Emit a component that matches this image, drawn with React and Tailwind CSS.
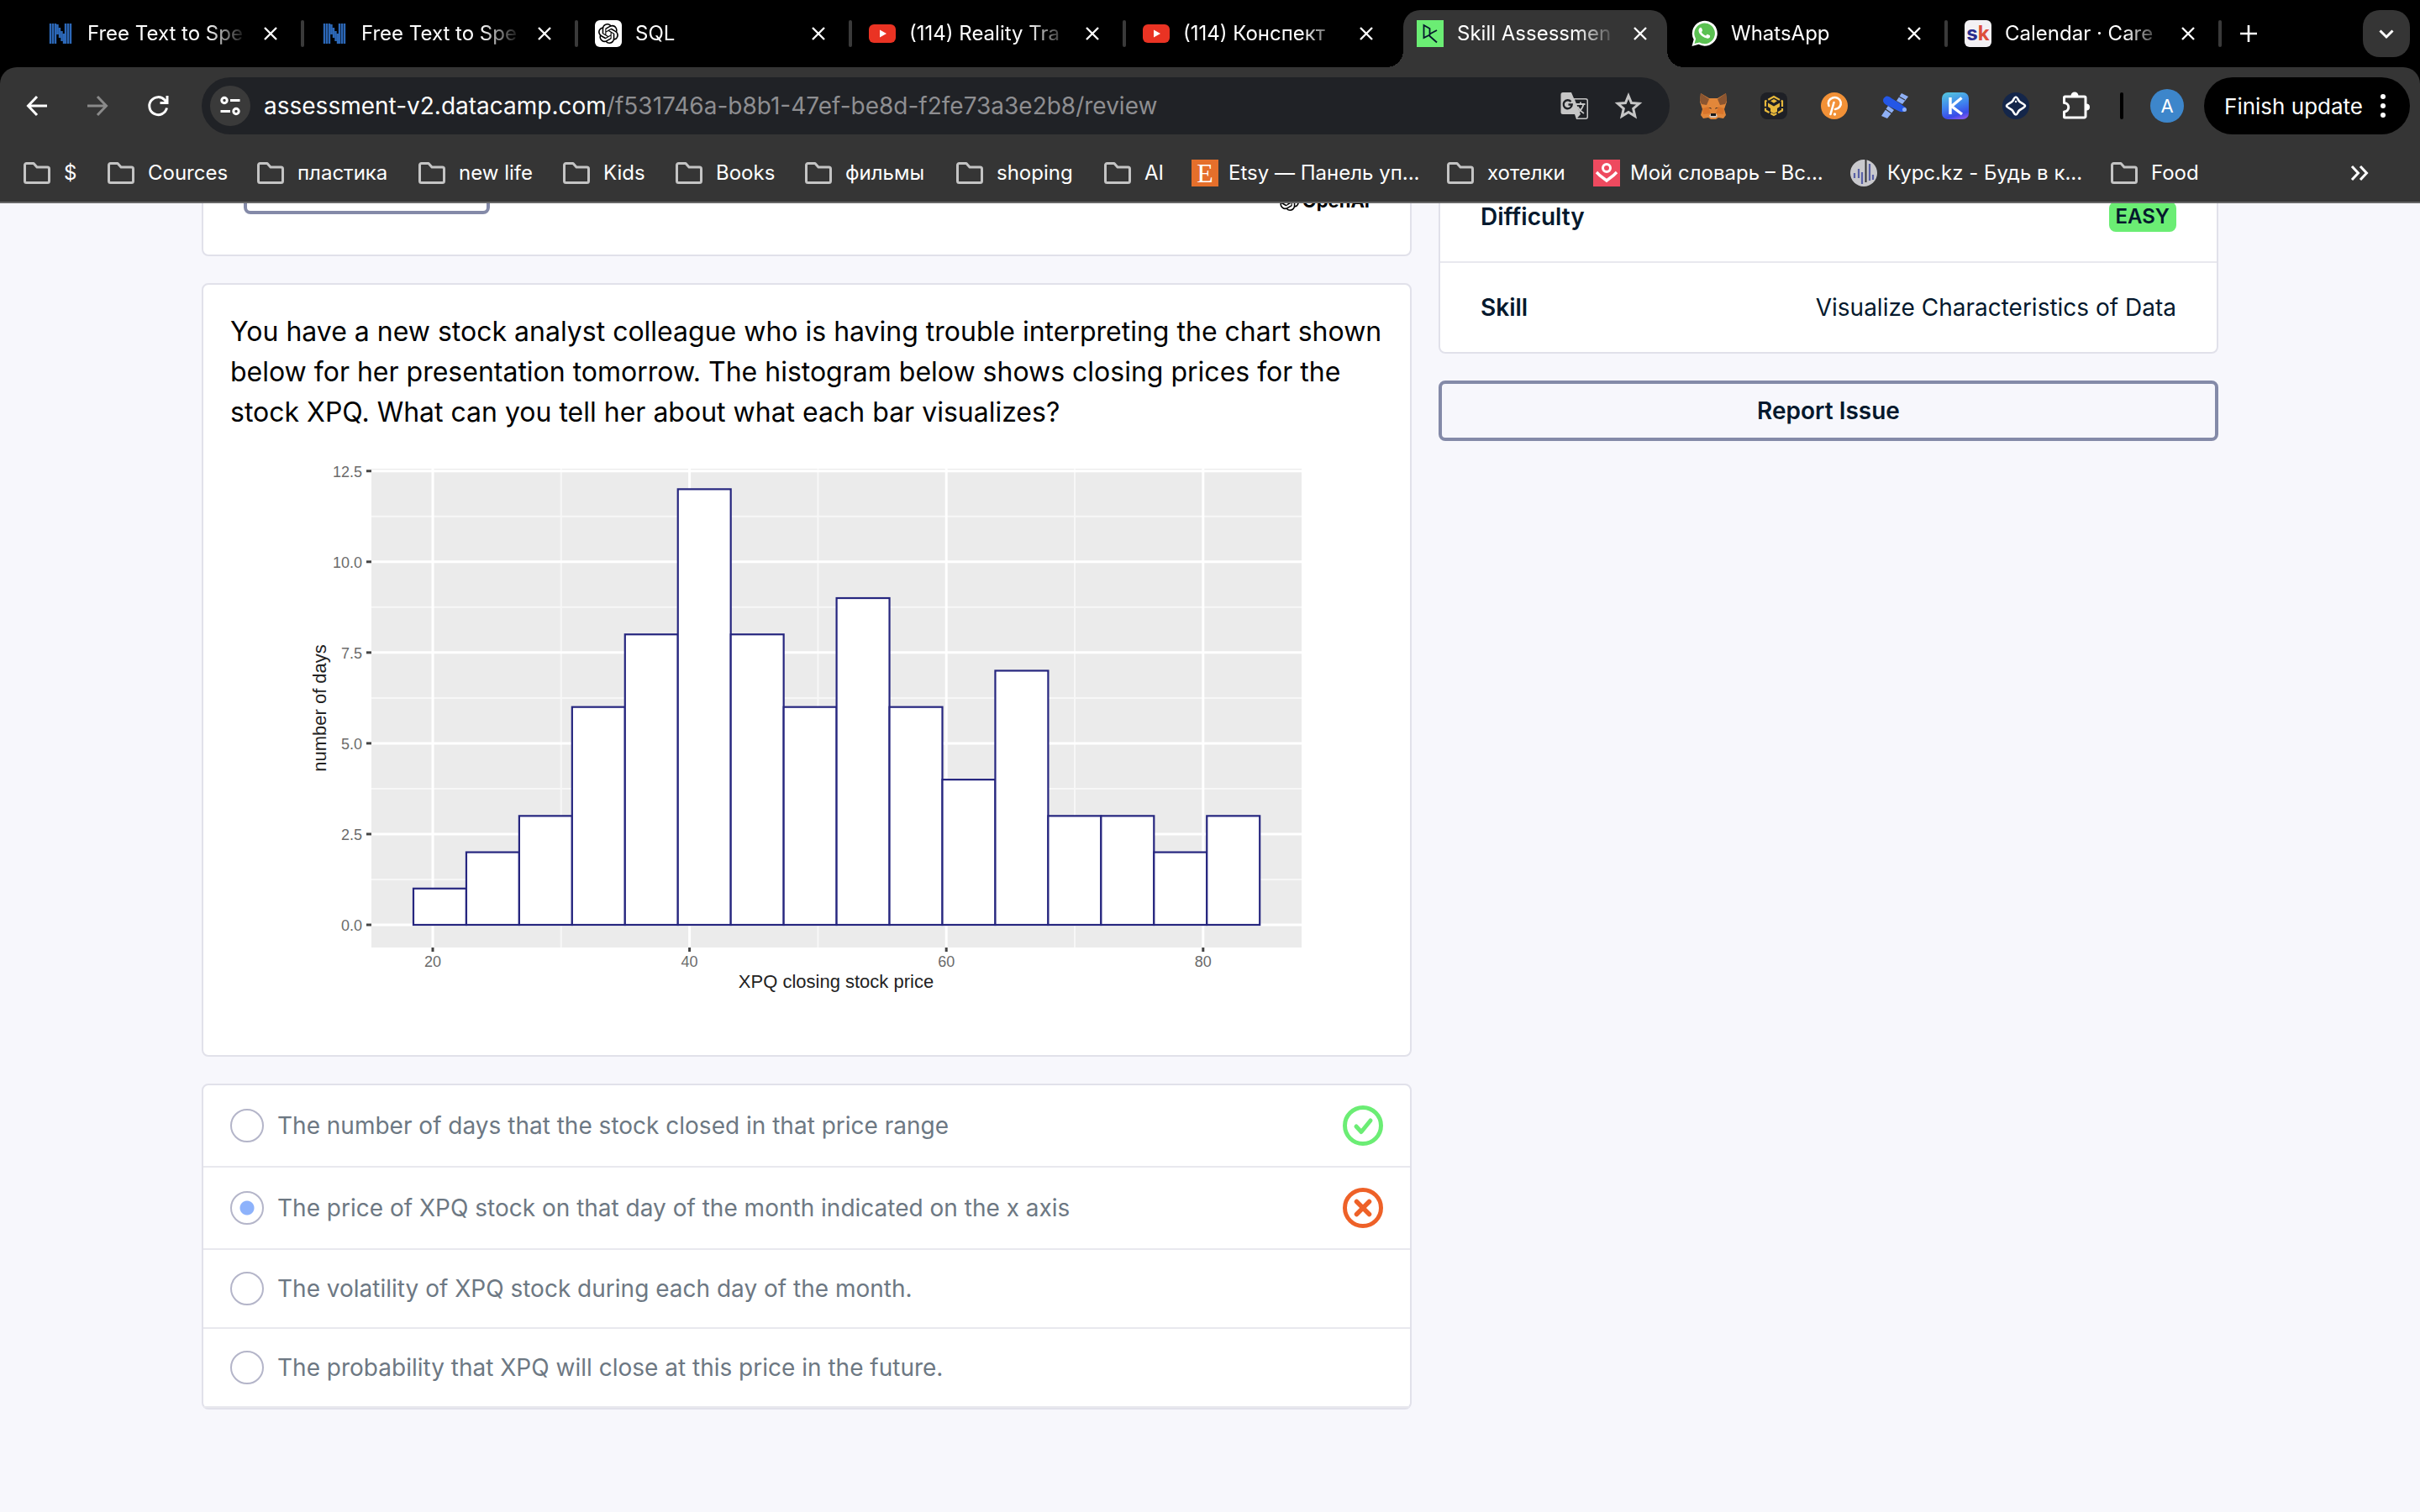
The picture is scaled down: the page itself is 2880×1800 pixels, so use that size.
import { SiOpenai } from "react-icons/si";

const FolderIcon = () => (
  <svg viewBox="0 0 32 32" className="size-8 shrink-0" fill="none" stroke="#c4c4c4" strokeWidth="3" strokeLinejoin="round">
    <path d="M1.5 6.500a2 2 0 0 1 2-2h8.500l4 4.500h12.500a2 2 0 0 1 2 2v14.500a2 2 0 0 1-2 2h-25a2 2 0 0 1-2-2z" />
  </svg>
);

const CloseIcon = () => (
  <svg viewBox="0 0 16 16" className="size-4" stroke="#fff" strokeWidth="2.400">
    <path d="M1 1l14 14M15 1L1 15" />
  </svg>
);

const NaturalIcon = () => (
  <svg viewBox="0 0 32 32" className="size-8 shrink-0" stroke="#2c68b8" strokeWidth="2.400">
    <path d="M4 4v24M7 4v24M10 4v24M22 4v24M25 4v24M28 4v24M12.500 5v12M15 9v12M17.500 13v12M20 16v12" />
  </svg>
);

const OpenAiTile = () => (
  <span className="flex size-8 shrink-0 items-center justify-center rounded-md bg-white">
    <SiOpenai className="size-6 text-black" />
  </span>
);

const YoutubeIcon = () => (
  <svg viewBox="0 0 32 32" className="size-8 shrink-0">
    <rect y="5" width="32" height="22" rx="6" fill="#ea3323" />
    <path d="M13 11.500v9l8-4.500z" fill="#fff" />
  </svg>
);

const DataCampIcon = () => (
  <svg viewBox="0 0 32 32" className="size-8 shrink-0">
    <rect width="32" height="32" fill="#6bed74" />
    <path d="M8.500 6v15l7-3.500v-7.500zM24 12l-8.500 4.500v2.500l8.500 7.500" fill="none" stroke="#05192d" strokeWidth="1.800" />
  </svg>
);

const WhatsAppIcon = () => (
  <svg viewBox="0 0 32 32" className="size-8 shrink-0">
    <path d="M1.500 31l2.200-8A15 15 0 1 1 9.500 28.800z" fill="#fff" />
    <path d="M4.500 28l1.600-5.800A12.300 12.300 0 1 1 10.500 26.500z" fill="#5bc152" />
    <path d="M10.500 9.500c1-1.200 2.200-.9 2.600.1l1 2.400c.2.600-1 1.700-1.100 2.200 1 2 2.800 3.500 5 4.400.6-.2 1.300-1.800 1.900-1.800l2.700 1.300c.9.500.6 2-.3 2.800-3.300 3-14.500-3.800-12.600-10z" fill="#fff" />
  </svg>
);

const CalendarIcon = () => (
  <span className="flex size-8 shrink-0 items-center justify-center rounded-md bg-[#f3f1f4] text-2xl leading-none font-bold">
    <span className="text-[#2b2e8c]">s</span>
    <span className="text-[#dd4f3b]">k</span>
  </span>
);

const tabs = [
  { title: "Free Text to Spe", icon: NaturalIcon, line: true },
  { title: "Free Text to Spe", icon: NaturalIcon, line: true },
  { title: "SQL", icon: OpenAiTile, line: true },
  { title: "(114) Reality Tra", icon: YoutubeIcon, line: true },
  { title: "(114) Конспект", icon: YoutubeIcon },
  { title: "Skill Assessmen", icon: DataCampIcon, active: true },
  { title: "WhatsApp", icon: WhatsAppIcon, line: true },
  { title: "Calendar · Care", icon: CalendarIcon, line: true },
];

function Tab({ tab }) {
  const Icon = tab.icon;
  return (
    <div className="relative flex h-20 w-[326px] items-center pr-[30px] pl-[22px]">
      {tab.active && (
        <div className="absolute inset-x-[6px] top-3 bottom-0 rounded-t-[20px] bg-[#353535]">
          <div className="absolute bottom-0 -left-5 size-5 bg-[radial-gradient(circle_at_0_0,transparent_20px,#353535_20px)]" />
          <div className="absolute -right-5 bottom-0 size-5 bg-[radial-gradient(circle_at_100%_0,transparent_20px,#353535_20px)]" />
        </div>
      )}
      <div className="relative flex min-w-0 flex-1 items-center">
        <Icon />
        <span className="ml-4 min-w-0 flex-1 mask-r-from-75% mask-r-to-100% text-2xl whitespace-nowrap">{tab.title}</span>
        <button aria-label="Close tab" className="ml-5">
          <CloseIcon />
        </button>
      </div>
      {tab.line && <span className="absolute right-[-2px] h-8 w-1 rounded-full bg-[#3a3a3a]" />}
    </div>
  );
}

const EtsyIcon = () => (
  <span className="flex size-8 shrink-0 items-center justify-center bg-[#e56f2b] font-['Liberation_Serif',serif] text-[32px] leading-none text-white">E</span>
);

const DictionaryIcon = () => (
  <svg viewBox="0 0 32 32" className="size-8 shrink-0">
    <rect width="32" height="32" fill="#ee4a5f" />
    <circle cx="16" cy="10" r="4.500" fill="none" stroke="#fff" strokeWidth="3" />
    <path d="M4 15l4 4 8 6 8-6 4-4" fill="none" stroke="#fff" strokeWidth="3.500" />
  </svg>
);

const CurrencyIcon = () => (
  <svg viewBox="0 0 32 32" className="size-8 shrink-0">
    <circle cx="16" cy="16" r="16" fill="#c9c9cd" />
    <path d="M5 16v6M10 11v11M14 15v14M23 5v20M27 18v6" stroke="#5961a6" strokeWidth="2.200" />
    <path d="M18.500 0v27" stroke="#333" strokeWidth="2" />
  </svg>
);

const bookmarks = [
  { label: "$", width: "w-[100px]" },
  { label: "Cources", width: "w-[178px]" },
  { label: "пластика", width: "w-[192px]" },
  { label: "new life", width: "w-[172px]" },
  { label: "Kids", width: "w-[134px]" },
  { label: "Books", width: "w-[154px]" },
  { label: "фильмы", width: "w-[180px]" },
  { label: "shoping", width: "w-[176px]" },
  { label: "AI", width: "w-[104px]" },
  { label: "Etsy — Панель уп...", width: "w-[304px]", icon: EtsyIcon },
  { label: "хотелки", width: "w-[174px]" },
  { label: "Мой словарь – Вс...", width: "w-[306px]", icon: DictionaryIcon },
  { label: "Курс.kz - Будь в к...", width: "w-[310px]", icon: CurrencyIcon },
  { label: "Food", width: "w-[120px]" },
];

const TranslateIcon = () => (
  <svg viewBox="0 0 34 34" className="size-[34px]">
    <path d="M3 1h10l3 7h14a3 3 0 0 1 3 3v19a3 3 0 0 1-3 3H19l-2-6H3a2.500 2.500 0 0 1-2.500-2.500v-21A2.500 2.500 0 0 1 3 1z" fill="#c6c6c6" />
    <path d="M17 9.500h13a1.500 1.500 0 0 1 1.500 1.500v19a1.500 1.500 0 0 1-1.500 1.500H20l4-4.500z" fill="#202226" />
    <path d="M18.500 15h11M24 12.500V15M27.500 15c-1 5-4 8-7 10M20.500 18c2 4 4 6 7.500 8" fill="none" stroke="#c6c6c6" strokeWidth="1.800" />
    <path d="M12.500 12a5 5 0 1 0 1.200 3.500H9.500" fill="none" stroke="#202226" strokeWidth="2.400" />
  </svg>
);

const StarIcon = () => (
  <svg viewBox="0 0 34 34" className="size-[34px]" fill="none" stroke="#c6c6c6" strokeWidth="3">
    <path d="M17 5l3.500 8.500 9.200.8-7 6 2.100 9L17 24.500l-7.800 4.800 2.100-9-7-6 9.200-.8z" />
  </svg>
);

const FoxIcon = () => (
  <svg viewBox="0 0 32 32" className="size-8">
    <path d="M1 1l10 6h10l10-6 1 10-3 9 2 7-3 4-6-1-3 2h-6l-3-2-6 1-3-4 2-7-3-9z" fill="#e2873a" />
    <path d="M1 1l10 7-3 7-6-1-2-4zM31 1L21 8l3 7 6-1 2-4z" fill="#8b5530" />
    <path d="M3 19l7-2 3 8-9 1zM29 19l-7-2-3 8 9 1z" fill="#d9752b" />
    <path d="M10 18l4 2-1-2zM22 18l-4 2 1-2z" fill="#4a3226" />
    <path d="M11 28l2-3h6l2 3-2 2h-6z" fill="#d5c5b8" />
    <path d="M13 25h6v3h-6z" fill="#18181a" />
  </svg>
);

const BinanceIcon = () => (
  <svg viewBox="0 0 32 32" className="size-8">
    <rect width="32" height="32" rx="8" fill="#1e2026" />
    <path d="M16 5l10 5.500v11L16 27 6 21.500v-11z" fill="none" stroke="#e8b93c" strokeWidth="2.200" strokeDasharray="8 2" />
    <path d="M16 8l4 2.300-4 2.400-4-2.400zM9 12.500l7 4 7-4v4.500l-3 2v4L16 25l-4-2v-4l-3-2z" fill="#e8b93c" />
  </svg>
);

const PolkadotIcon = () => (
  <svg viewBox="0 0 32 32" className="size-8">
    <circle cx="16" cy="16" r="16" fill="#f29137" />
    <path d="M9.500 16a7.500 7 0 1 1 7.500 4M15.500 12L11.500 26" fill="none" stroke="#fff" strokeWidth="2.600" strokeLinecap="round" />
    <circle cx="16.500" cy="26" r="1.700" fill="#fff" />
  </svg>
);

const SatelliteIcon = () => (
  <svg viewBox="0 0 32 32" className="size-8">
    <path d="M24 1l8 4-7 9-7-4zM8 16l7 5-8 10-7-3z" fill="#8fb0f5" />
    <path d="M21 5l7 4M5 20l7 5" stroke="#353535" strokeWidth="1.200" />
    <path d="M5 5c2-1 5 0 7 2l10 6 4 3 3 2c1 3-1 5-3 5-3 1-5-1-8-2L6 15C2 13 0 8 5 5z" fill="#2457e6" />
    <circle cx="27.500" cy="20.500" r="2.500" fill="#8fb0f5" />
  </svg>
);

const KeplrIcon = () => (
  <svg viewBox="0 0 32 32" className="size-8">
    <defs>
      <linearGradient id="keplr" x1="0.300" y1="0" x2="0.600" y2="1">
        <stop offset="0" stopColor="#52c0e0" />
        <stop offset="0.500" stopColor="#3f82ee" />
        <stop offset="0.850" stopColor="#3b4be8" />
        <stop offset="1" stopColor="#7a55ee" />
      </linearGradient>
    </defs>
    <rect width="32" height="32" rx="7" fill="url(#keplr)" />
    <path d="M10 6v20M23.500 6.500l-12 10 12.500 9.500" fill="none" stroke="#fff" strokeWidth="3.400" />
  </svg>
);

const StarWalletIcon = () => (
  <svg viewBox="0 0 32 32" className="size-8">
    <circle cx="16" cy="16" r="16" fill="#14264a" />
    <path d="M16 5.500c2 0 2.500 3 4 5s7 3.500 7 5.500-5 3.500-7 5.500-2 5-4 5-2.500-3-4-5-7-3.500-7-5.500 5.500-3.500 7-5.500 2-5 4-5z" fill="none" stroke="#fff" strokeWidth="2.600" />
    <circle cx="16" cy="11" r="1.200" fill="#fff" />
  </svg>
);

const PuzzleIcon = () => (
  <svg viewBox="0 0 32 34" className="h-[34px] w-8">
    <path d="M2.500 6h23a1.500 1.500 0 0 1 1.500 1.500v22a1.500 1.500 0 0 1-1.500 1.500h-23a1 1 0 0 1-1-1v-6a5 5 0 0 0 0-10.500V7a1 1 0 0 1 1-1z" fill="none" stroke="#fff" strokeWidth="3" strokeLinejoin="round" />
    <path d="M9.500 5a4.500 4.500 0 0 1 9 0zM28 14.500a4 4 0 0 1 0 8z" fill="#fff" />
  </svg>
);

const extensions = [
  ["MetaMask", FoxIcon],
  ["BNB wallet", BinanceIcon],
  ["Polkadot", PolkadotIcon],
  ["Satellite", SatelliteIcon],
  ["Keplr", KeplrIcon],
  ["Star wallet", StarWalletIcon],
  ["Extensions", PuzzleIcon],
];

function BrowserChrome() {
  return (
    <header className="shrink-0 bg-black text-white">
      <nav className="flex h-20 items-center pr-3 pl-[34px]" aria-label="Tabs">
        {tabs.map((tab, i) => (
          <Tab key={i} tab={tab} />
        ))}
        <button aria-label="New tab" className="ml-[22px]">
          <svg viewBox="0 0 24 24" className="size-6" stroke="#fff" strokeWidth="2.600">
            <path d="M12 2v20M2 12h20" />
          </svg>
        </button>
        <button aria-label="Search tabs" className="ml-auto flex size-14 items-center justify-center rounded-[20px] bg-[#353535]">
          <svg viewBox="0 0 20 20" className="size-5" fill="none" stroke="#fff" strokeWidth="3">
            <path d="M2.500 6.500L10 14l7.500-7.500" />
          </svg>
        </button>
      </nav>

      <div className="rounded-t-[20px] border-b-2 border-[#666] bg-[#353535]">
        <div className="flex h-[92px] items-center pt-3 pr-3 pb-3 pl-7">
          <div className="flex gap-10">
            <button aria-label="Back">
              <svg viewBox="0 0 32 32" className="size-8" fill="none" stroke="#fff" strokeWidth="3">
                <path d="M28 16H6M16 5L5.500 16 16 27" />
              </svg>
            </button>
            <button aria-label="Forward">
              <svg viewBox="0 0 32 32" className="size-8" fill="none" stroke="#8a8a8a" strokeWidth="3">
                <path d="M4 16h22M16 5l10.500 11L16 27" />
              </svg>
            </button>
            <button aria-label="Reload">
              <svg viewBox="0 0 32 32" className="size-8" fill="none" stroke="#fff" strokeWidth="3">
                <path d="M26.500 18.500a10.500 10.500 0 1 1-2.500-9.500l3 3.500M27 4v8.500h-8.500" />
              </svg>
            </button>
          </div>
          <div className="mr-9 ml-9 flex h-[68px] flex-1 items-center rounded-full bg-[#202226] pr-8 pl-[10px]">
            <button aria-label="Site information" className="flex size-12 items-center justify-center rounded-full bg-[#3a3a3a]">
              <svg viewBox="0 0 28 28" className="size-7" fill="none" stroke="#fff" strokeWidth="3">
                <circle cx="7" cy="7.500" r="3.200" />
                <path d="M14 7.500h11.500M2.500 20.500H14" />
                <circle cx="21" cy="20.500" r="3.200" />
              </svg>
            </button>
            <p className="ml-4 text-[28px] leading-9 text-[#8e8e91]">
              <span className="text-white">assessment-v2.datacamp.com</span>/f531746a-b8b1-47ef-be8d-f2fe73a3e2b8/review
            </p>
            <div className="ml-auto flex items-center gap-[30px]">
              <button aria-label="Translate">
                <TranslateIcon />
              </button>
              <button aria-label="Bookmark this page">
                <StarIcon />
              </button>
            </div>
          </div>
          <div className="flex items-center gap-10">
            {extensions.map(([name, Icon]) => (
              <button key={name} aria-label={name}>
                <Icon />
              </button>
            ))}
          </div>
          <span className="ml-9 h-8 w-1 rounded-full bg-black" />
          <button className="ml-8 flex size-10 items-center justify-center rounded-full bg-[#3d86cb] text-[22px] leading-none">A</button>
          <button className="ml-6 flex h-[68px] items-center rounded-full bg-black pr-7 pl-6 text-[26px]">
            Finish update
            <svg viewBox="0 0 8 32" className="ml-5 h-8 w-2" fill="#fff">
              <circle cx="4" cy="5" r="3" />
              <circle cx="4" cy="16" r="3" />
              <circle cx="4" cy="27" r="3" />
            </svg>
          </button>
        </div>
        <nav className="flex h-[68px] items-center pl-7" aria-label="Bookmarks">
          {bookmarks.map(({ label, width, icon: Icon = FolderIcon }) => (
            <a key={label} href="#" className={`flex shrink-0 items-center whitespace-nowrap text-2xl ${Icon === FolderIcon ? "gap-4" : "gap-3"} ${width}`}>
              <Icon />
              {label}
            </a>
          ))}
          <button aria-label="More bookmarks" className="mr-[60px] ml-auto">
            <svg viewBox="0 0 24 24" className="size-6" fill="none" stroke="#fff" strokeWidth="3">
              <path d="M3 4l7.500 8L3 20M13 4l7.500 8-7.500 8" />
            </svg>
          </button>
        </nav>
      </div>
    </header>
  );
}

const counts = [1, 2, 3, 6, 8, 12, 8, 6, 9, 6, 4, 7, 3, 3, 2, 3];
const baseY = 562;
const unitY = 43.22;
const panel = { left: 168, right: 1275, top: 19, bottom: 589 };
const xOf = (v) => 241 + (v - 20) * 15.28;
const yOf = (v) => baseY - v * unitY;

function Histogram() {
  return (
    <svg viewBox="0 0 1372 660" className="mt-6 block w-full font-['Liberation_Sans',sans-serif]" role="img" aria-label="Histogram of XPQ closing stock price">
      <rect x={panel.left} y={panel.top} width={panel.right - panel.left} height={panel.bottom - panel.top} fill="#ebebeb" />
      {[1.25, 3.75, 6.25, 8.75, 11.25].map((v) => (
        <path key={v} d={`M${panel.left} ${yOf(v)}H${panel.right}`} stroke="#f7f7f7" strokeWidth="2" />
      ))}
      {[30, 50, 70].map((v) => (
        <path key={v} d={`M${xOf(v)} ${panel.top}V${panel.bottom}`} stroke="#f7f7f7" strokeWidth="2" />
      ))}
      {[0, 2.5, 5, 7.5, 10, 12.5].map((v) => (
        <g key={v}>
          <path d={`M${panel.left} ${yOf(v)}H${panel.right}`} stroke="#fff" strokeWidth="3" />
          <path d={`M${panel.left - 6} ${yOf(v)}h6`} stroke="#444" strokeWidth="3" />
          <text x="157" y={yOf(v) + 7} textAnchor="end" fontSize="18" fill="#6b6b6b">{v.toFixed(1)}</text>
        </g>
      ))}
      {[20, 40, 60, 80].map((v) => (
        <g key={v}>
          <path d={`M${xOf(v)} ${panel.top}V${panel.bottom}`} stroke="#fff" strokeWidth="3" />
          <path d={`M${xOf(v)} ${panel.bottom}v5`} stroke="#444" strokeWidth="3" />
          <text x={xOf(v)} y="612" textAnchor="middle" fontSize="18" fill="#6b6b6b">{v}</text>
        </g>
      ))}
      {counts.map((c, i) => (
        <rect key={i} x={218 + i * 62.95} y={yOf(c)} width="62.95" height={c * unitY} fill="#fff" stroke="#26267f" strokeWidth="2.200" />
      ))}
      <text x="721" y="637" textAnchor="middle" fontSize="22" fill="#222">XPQ closing stock price</text>
      <text transform="translate(114 304) rotate(-90)" textAnchor="middle" fontSize="22" fill="#222">number of days</text>
    </svg>
  );
}

const CheckCircle = () => (
  <svg viewBox="0 0 48 48" className="size-12" fill="none" stroke="#6bed74" strokeLinecap="round" strokeLinejoin="round" role="img" aria-label="Correct">
    <circle cx="24" cy="24" r="21.500" strokeWidth="5" />
    <path d="M16 25l6 6.500L33 18" strokeWidth="5" />
  </svg>
);

const CrossCircle = () => (
  <svg viewBox="0 0 48 48" className="size-12" fill="none" stroke="#ee6128" strokeLinecap="round" role="img" aria-label="Incorrect">
    <circle cx="24" cy="24" r="21.500" strokeWidth="5" />
    <path d="M16.500 16.500l15 15M31.500 16.500l-15 15" strokeWidth="5.500" />
  </svg>
);

const answers = [
  { text: "The number of days that the stock closed in that price range", mark: CheckCircle },
  { text: "The price of XPQ stock on that day of the month indicated on the x axis", mark: CrossCircle, chosen: true },
  { text: "The volatility of XPQ stock during each day of the month." },
  { text: "The probability that XPQ will close at this price in the future." },
];

const card = "rounded-lg border-2 border-[#e1e1ea] bg-white";

export default function App() {
  return (
    <div className="flex min-h-screen flex-col bg-[#f7f7fc] font-[Inter,'Noto_Sans',sans-serif]">
      <BrowserChrome />
      <main className="flex-1 overflow-hidden px-60 pb-20">
        <div className="-mt-[109px] grid grid-cols-[1440fr_928fr] items-start gap-8">
          <div className="flex flex-col gap-8">
            <section className={`${card} flex items-end justify-between p-12`}>
              <button aria-label="Explain answer" className="h-[72px] w-[293px] rounded-lg border-4 border-[#848aa8]" />
              <div className="flex items-center gap-1">
                <SiOpenai className="size-6" />
                <span className="text-[22px] leading-8 font-bold">OpenAI</span>
              </div>
            </section>

            <section className={`${card} px-8 pt-8 pb-[57px]`}>
              <p className="text-[32px] leading-[48px] text-black">
                You have a new stock analyst colleague who is having trouble interpreting the chart shown
                below for her presentation tomorrow. The histogram below shows closing prices for the
                stock XPQ. What can you tell her about what each bar visualizes?
              </p>
              <Histogram />
            </section>

            <section className={card}>
              {answers.map(({ text, mark: Mark, chosen }) => (
                <label key={text} className="flex min-h-[94px] items-center border-b-2 border-[#e8e8ee] px-8 text-[28px] leading-9 text-[#6d7883] has-[svg]:min-h-[98px]">
                  <input
                    type="radio"
                    name="answer"
                    defaultChecked={chosen}
                    className="mr-4 size-10 shrink-0 appearance-none rounded-full border-2 border-[#b4b5c9] bg-white checked:bg-[radial-gradient(circle,#8db2fb_8px,transparent_9px)]"
                  />
                  <span className="flex-1">{text}</span>
                  {Mark && <Mark />}
                </label>
              ))}
            </section>
          </div>

          <aside className="mt-[70px] flex flex-col gap-8 text-[#05192d]">
            <dl className={`${card} text-[28px] leading-9`}>
              <div className="flex h-[108px] items-center justify-between border-b-2 border-[#e8e8ee] px-12">
                <dt className="font-semibold">Difficulty</dt>
                <dd className="rounded-lg bg-[#6bed74] px-2 text-2xl leading-9 font-semibold">EASY</dd>
              </div>
              <div className="flex h-[106px] items-center justify-between px-12">
                <dt className="font-semibold">Skill</dt>
                <dd>Visualize Characteristics of Data</dd>
              </div>
            </dl>
            <button className="h-[72px] rounded-lg border-4 border-[#848aa8] text-[28px] font-semibold">Report Issue</button>
          </aside>
        </div>
      </main>
    </div>
  );
}
